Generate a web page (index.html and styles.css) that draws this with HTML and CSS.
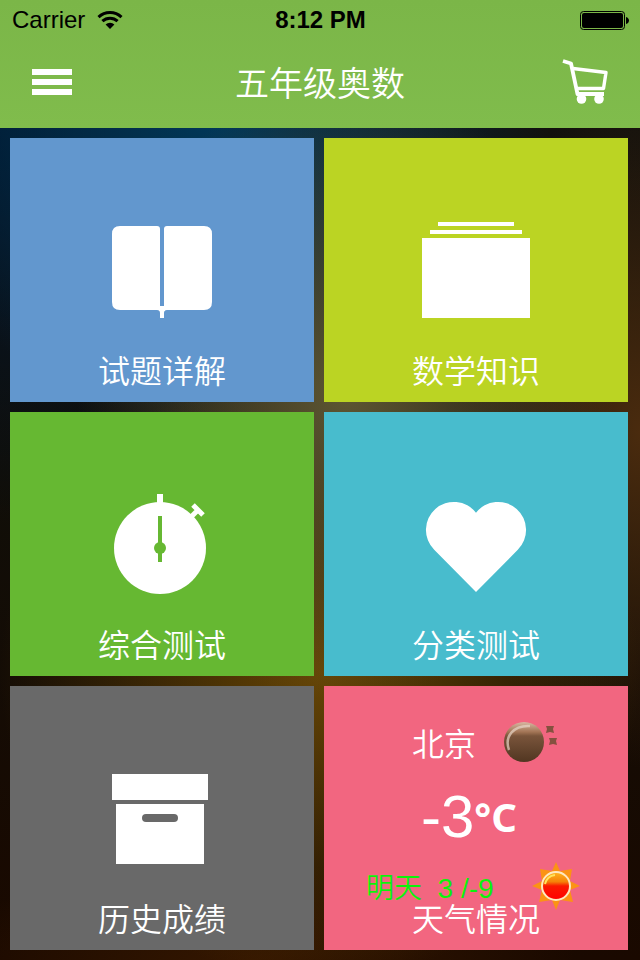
FILE: index.html
```html
<!DOCTYPE html>
<html lang="zh-CN">
<head>
<meta charset="utf-8">
<meta name="viewport" content="width=device-width, initial-scale=1">
<title>五年级奥数</title>
<link rel="stylesheet" href="styles.css">
</head>
<body>
<header class="header">
  <div class="status">
    <div class="carrier">
      <span>Carrier</span>
      <svg class="wifi" viewBox="0 0 26 20" aria-hidden="true">
        <path d="M1.5 7.2a16.5 16.5 0 0 1 23 0" fill="none" stroke="#000" stroke-width="3"/>
        <path d="M5.4 11.2a11 11 0 0 1 15.2 0" fill="none" stroke="#000" stroke-width="3"/>
        <path d="M8.6 14.6a6.3 6.3 0 0 1 8.8 0L13 19z"/>
      </svg>
    </div>
    <time class="clock">8:12 PM</time>
    <svg class="battery" viewBox="0 0 49 20" aria-hidden="true">
      <rect x=".5" y="1.5" width="44" height="18" rx="3" fill="none" stroke="#000"/>
      <rect x="2" y="3" width="41" height="15" rx="2"/>
      <path d="M46 7c4 1 4 6 0 7z"/>
    </svg>
  </div>
  <nav class="navbar">
    <button class="nav-button" type="button" aria-label="菜单">
      <svg class="menu-icon" viewBox="0 0 40 26" aria-hidden="true"><path d="M0 0h40v6H0zM0 10h40v6H0zM0 20h40v6H0z" fill="#fff"/></svg>
    </button>
    <h1 class="title">五年级奥数</h1>
    <button class="nav-button nav-button-end" type="button" aria-label="购物车">
      <svg class="cart-icon" viewBox="0 0 46 46" aria-hidden="true">
        <g fill="none" stroke="#fff" stroke-linejoin="round">
          <path d="M1 2l8 2.5L15.500 35H42" stroke-width="3.8"/>
          <path d="M11 9.500L44 13.500 41.500 29.500H14.500" stroke-width="3.4"/>
        </g>
        <circle cx="19.5" cy="40" r="4.8" fill="#fff"/>
        <circle cx="37" cy="40" r="4.8" fill="#fff"/>
      </svg>
    </button>
  </nav>
</header>
<main class="grid">
  <a class="tile tile-blue" href="#exercises">
    <svg class="icon" viewBox="0 0 120 120" aria-hidden="true">
      <path d="M18 12h37q3 0 3 3v77h4V15q0-3 3-3h37q8 0 8 8v68q0 8-8 8H65q-3 0-3 3v5h-4v-5q0-3-3-3H18q-8 0-8-8V20q0-8 8-8z"/>
      <path d="M57 92h6v5h-6z"/>
    </svg>
    <span class="label">试题详解</span>
  </a>
  <a class="tile tile-lime" href="#knowledge">
    <svg class="icon" viewBox="0 0 120 120" aria-hidden="true">
      <path d="M22 8h76v4H22zM14 16h92v4H14zM6 24h108v80H6z"/>
    </svg>
    <span class="label">数学知识</span>
  </a>
  <a class="tile tile-green" href="#mixed-test">
    <svg class="icon" viewBox="0 0 120 120" aria-hidden="true">
      <circle cx="58" cy="60" r="46"/>
      <path d="M55 6h6v10h-6z"/>
      <path d="M91 17l10 10M96 22l-8 8" stroke="#fff" stroke-width="5"/>
      <g fill="#66b832"><path d="M56 28h4v46h-4z"/><circle cx="58" cy="60" r="6"/></g>
    </svg>
    <span class="label">综合测试</span>
  </a>
  <a class="tile tile-cyan" href="#topic-test">
    <svg class="icon" viewBox="0 0 120 120" aria-hidden="true">
      <path d="M60 24.7A28 28 0 1 0 18.2 61.8L60 104 101.800 61.800A28 28 0 1 0 60 24.7z"/>
    </svg>
    <span class="label">分类测试</span>
  </a>
  <a class="tile tile-gray" href="#history">
    <svg class="icon" viewBox="0 0 120 120" aria-hidden="true">
      <path d="M10 12h96v26H10zM14 42h88v60H14z"/>
      <rect x="40" y="52" width="36" height="8" rx="4" fill="#696969"/>
    </svg>
    <span class="label">历史成绩</span>
  </a>
  <a class="tile tile-pink" href="#weather">
    <span class="weather">
      <span class="today">
        <span class="city">北京</span>
        <svg class="moon" viewBox="0 0 54 40" aria-hidden="true">
          <defs>
            <linearGradient id="moon" x1="0" y1="0" x2="0" y2="1">
              <stop offset="0" stop-color="#d8b7a2"/><stop offset=".25" stop-color="#a27455"/>
              <stop offset=".35" stop-color="#79543b"/><stop offset="1" stop-color="#513621"/>
            </linearGradient>
          </defs>
          <circle cx="20" cy="20" r="20" fill="url(#moon)"/>
          <path d="M5 28C0 14 10 3 26 4" fill="none" stroke="#e8d5c8" stroke-width="2.5" opacity=".7"/>
          <path d="M42 4h8l-1 3 1 4-4-1-4 1 1-4zM45 16h8l-1 3 1 4-4-1-4 1 1-4z" fill="#85513f"/>
        </svg>
      </span>
      <span class="now"><span class="degrees">-3</span><span class="unit">°C</span></span>
      <span class="tomorrow">
        <span class="forecast">明天&nbsp; 3 /-9</span>
        <svg class="sun" viewBox="0 0 48 48" aria-hidden="true">
          <defs>
            <linearGradient id="sun" x1="0" y1="0" x2="0" y2="1">
              <stop offset="0" stop-color="#ffb51e"/><stop offset=".35" stop-color="#f58208"/>
              <stop offset=".5" stop-color="#fb1900"/><stop offset="1" stop-color="#f00"/>
            </linearGradient>
          </defs>
          <path d="M24 0l4 9 12-2-2 12 10 5-10 4 3 12-13-2-4 10-4-10-13 2 3-12-10-4 10-5L8 7l12 2z" fill="#fb9314"/>
          <circle cx="24" cy="24" r="14" fill="url(#sun)" stroke="#ffe9c0" stroke-width="2"/>
          <path d="M13 22q2-8 10-9" fill="none" stroke="#ffe45c" stroke-width="2"/>
        </svg>
      </span>
    </span>
    <span class="label">天气情况</span>
  </a>
</main>
</body>
</html>
```
FILE: styles.css
```css
* {
  box-sizing: border-box;
}

body {
  margin: 0;
  min-height: 100vh;
  display: flex;
  flex-direction: column;
  color: #fff;
  font-family: "Liberation Sans", "Noto Sans CJK SC", sans-serif;
  background:
    radial-gradient(ellipse 42% 32% at 54% 41%, #5d5633 0%, transparent 100%),
    radial-gradient(ellipse 50% 32% at 50% 70%, #664505 0%, transparent 100%),
    radial-gradient(ellipse 52% 32% at 34% 12%, #00385a 0%, transparent 100%),
    radial-gradient(ellipse 30% 35% at 100% 45%, #4a2b0e 0%, transparent 100%),
    radial-gradient(ellipse 50% 10% at 40% 100%, #351700 0%, transparent 100%),
    radial-gradient(ellipse 60% 42% at 0% 12%, #00142b 0%, transparent 100%),
    linear-gradient(#14120f, #100e08 50%, #1a0900);
}

.header {
  background: linear-gradient(#7bb648, #80bc4c);
}

.status {
  height: 40px;
  padding: 0 11px 0 12px;
  display: grid;
  grid-template-columns: 1fr auto 1fr;
  align-items: center;
  color: #000;
  font-size: 24px;
  line-height: 40px;
}

.carrier {
  display: flex;
  align-items: center;
  gap: 12px;
}

.wifi {
  width: 26px;
  height: 20px;
}

.clock {
  font-weight: bold;
}

.battery {
  width: 49px;
  height: 20px;
  justify-self: end;
}

.navbar {
  height: 88px;
  padding: 0 32px;
  display: grid;
  grid-template-columns: 1fr auto 1fr;
  align-items: center;
}

.nav-button {
  display: flex;
  justify-self: start;
  padding: 0 0 4px;
  border: 0;
  background: none;
  cursor: pointer;
}

.nav-button-end {
  justify-self: end;
}

.menu-icon {
  width: 40px;
  height: 26px;
}

.cart-icon {
  width: 46px;
  height: 46px;
}

.title {
  margin: 0;
  font-size: 34px;
  font-weight: 350;
  line-height: 48px;
}

.grid {
  flex: 1;
  display: grid;
  grid-template-columns: 1fr 1fr;
  grid-auto-rows: minmax(264px, 1fr);
  gap: 10px;
  padding: 10px 12px 10px 10px;
}

.tile {
  display: flex;
  flex-direction: column;
  align-items: center;
  justify-content: flex-end;
  padding-bottom: 10px;
  color: #fff;
  text-decoration: none;
}

.tile-blue { background: #6297ce; }
.tile-lime { background: #bbd423; }
.tile-green { background: #66b832; }
.tile-cyan { background: #48bccd; }
.tile-gray { background: #696969; }
.tile-pink { background: #f26680; }

.icon {
  width: 120px;
  height: 120px;
  margin-bottom: 18px;
  fill: #fff;
}

.label,
.city {
  font-size: 32px;
  font-weight: 350;
  line-height: 40px;
}

.weather {
  width: 220px;
  display: flex;
  flex-direction: column;
  margin-bottom: -10px;
}

.today {
  height: 48px;
  padding-left: 46px;
  display: flex;
  align-items: center;
  gap: 28px;
}

.city {
  padding-top: 6px;
}

.moon {
  width: 54px;
  height: 40px;
}

.now {
  height: 96px;
  padding: 4px 14px 0 0;
  display: flex;
  align-items: center;
  justify-content: center;
}

.degrees {
  font-size: 60px;
}

.unit {
  font-family: "Noto Sans", sans-serif;
  font-size: 40px;
  font-weight: 700;
}

.tomorrow {
  height: 48px;
  display: flex;
  align-items: center;
  justify-content: space-between;
  padding-right: 6px;
}

.forecast {
  color: #0cf20c;
  font-size: 28px;
  font-weight: 350;
}

.sun {
  width: 48px;
  height: 48px;
}
```
